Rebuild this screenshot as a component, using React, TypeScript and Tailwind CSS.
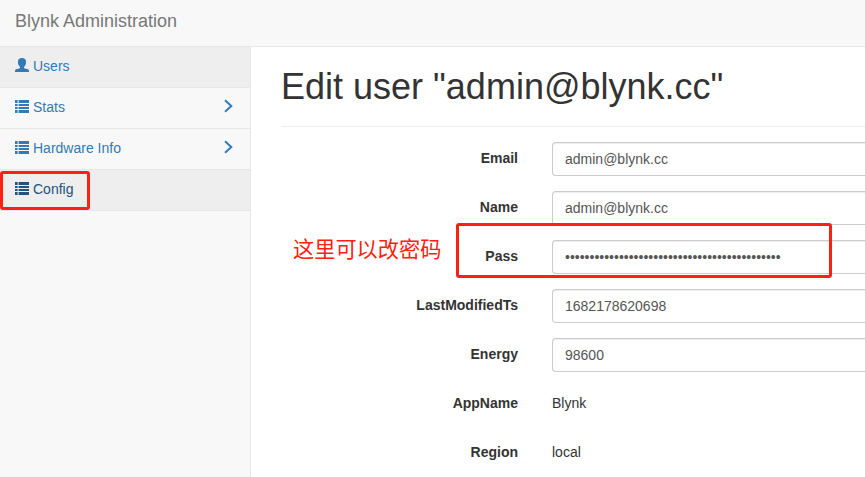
import React from "react";

const font = "font-['Liberation_Sans','Noto_Sans_CJK_SC',sans-serif]";

const bars = [
  { y: 1, h: 3 },
  { y: 5, h: 2 },
  { y: 8, h: 2 },
  { y: 11, h: 3 },
];

function ListIcon() {
  return (
    <svg className="mr-1 mb-[2px] h-3.5 w-3.5 shrink-0" viewBox="0 0 14 14" fill="currentColor">
      {bars.map(({ y, h }) => (
        <g key={y}>
          <rect x="0" y={y} width="2.6" height={h} />
          <rect x="3.6" y={y} width="10.4" height={h} />
        </g>
      ))}
    </svg>
  );
}

function UserIcon() {
  return (
    <svg className="mr-1 mb-[3px] h-3.5 w-3.5 shrink-0" viewBox="0 0 14 14" fill="currentColor">
      <path d="M7 0C4.3 0 3 1.400 3 3.500c0 1 .1 1.300 0 1.700-.1.600.3 1.300.6 1.600.2 1 .7 1.700 1.400 2.200v1c-.6.600-3.200.8-4.300 1.400C.1 11.800 0 12.500 0 14h14c0-1.500-.1-2.200-.7-2.600-1.100-.6-3.700-.8-4.300-1.400V9c.7-.5 1.200-1.200 1.400-2.200.3-.3.7-1 .6-1.600-.1-.4 0-.7 0-1.700C11 1.400 9.700 0 7 0Z" />
    </svg>
  );
}

function Chevron() {
  return (
    <svg className="mb-[3px] ml-auto h-3.5 w-2.5" viewBox="0 0 10 14" fill="none" stroke="currentColor" strokeWidth="2">
      <path d="M2 1.300 8.300 7 2 12.700" />
    </svg>
  );
}

const menu = [
  { label: "Users", color: "bg-[#eeeeee] text-[#337ab7]", user: true, arrow: false },
  { label: "Stats", color: "text-[#337ab7]", user: false, arrow: true },
  { label: "Hardware Info", color: "text-[#337ab7]", user: false, arrow: true },
  { label: "Config", color: "bg-[#eeeeee] text-[#23527c]", user: false, arrow: false, marked: true },
];

const fields = [
  { label: "Email", value: "admin@blynk.cc", input: true },
  { label: "Name", value: "admin@blynk.cc", input: true },
  { label: "Pass", value: "•".repeat(44), input: true },
  { label: "LastModifiedTs", value: "1682178620698", input: true },
  { label: "Energy", value: "98600", input: true },
  { label: "AppName", value: "Blynk", input: false },
  { label: "Region", value: "local", input: false },
];

export default function App() {
  return (
    <div className={`relative flex h-[477px] w-[865px] flex-col overflow-hidden bg-white text-sm leading-5 text-[#333333] ${font}`}>
      <header className="flex h-[47px] shrink-0 items-start border-b border-[#e7e7e7] bg-[#f8f8f8] pt-[11px] pl-[15px] text-lg leading-5 text-[#777777]">
        Blynk Administration
      </header>
      <div className="flex min-h-0 flex-1">
        <nav className="w-[251px] shrink-0 border-r border-[#e7e7e7] bg-[#f8f8f8]">
          {menu.map((m) => (
            <a key={m.label} className={`relative flex h-[41px] items-center border-b border-[#e7e7e7] pr-[17px] pb-[2px] pl-[15px] ${m.color}`}>
              {m.user ? <UserIcon /> : <ListIcon />}
              {m.label}
              {m.arrow && <Chevron />}
              {m.marked && <span className="absolute top-[1px] left-0 h-[39px] w-[90px] rounded-[3px] border-3 border-[#ff2010]" />}
            </a>
          ))}
        </nav>
        <main className="flex-1 pl-[30px]">
          <h1 className="mb-[15px] h-20 border-b border-[#eeeeee] pt-5 text-4xl leading-[40px]">
            Edit user "admin@blynk.cc"
          </h1>
          <div className="flex flex-col gap-[15px]">
            {fields.map((f) => (
              <div key={f.label} className="relative flex h-[34px]">
                <span className="w-[237px] pt-[6px] text-right font-bold">{f.label}</span>
                {f.input ? (
                  <span className="ml-[34px] flex-1 rounded-l border border-r-0 border-[#cccccc] pt-[6px] pl-3 text-[#555555] shadow-[inset_0_1px_1px_rgba(0,0,0,0.075)]">
                    {f.value}
                  </span>
                ) : (
                  <span className="ml-[34px] pt-[6px]">{f.value}</span>
                )}
                {f.label === "Pass" && (
                  <>
                    <span className="absolute top-[-17px] left-[175px] z-10 h-[55px] w-[376px] rounded-[3px] border-3 border-[#ff2010]" />
                    <span className="absolute top-[-5px] left-[12px] text-[21.2px] leading-[30px] whitespace-nowrap text-[#ff2010]">这里可以改密码</span>
                  </>
                )}
              </div>
            ))}
          </div>
        </main>
      </div>
    </div>
  );
}
